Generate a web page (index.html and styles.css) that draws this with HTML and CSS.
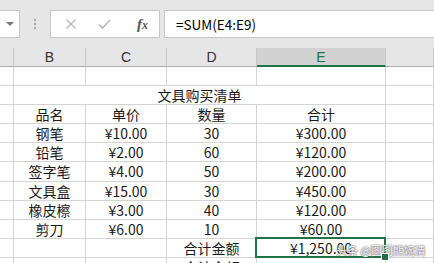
FILE: index.html
```html
<!DOCTYPE html>
<html lang="zh-CN">
<head>
    <meta charset="UTF-8">
    <title>文具购买清单</title>
    <link rel="stylesheet" href="styles.css">
</head>
<body>
    <div class="toolbar">
        <div class="name-box"><span class="arrow"></span></div>
        <div class="grip"><i></i><i></i><i></i></div>
        <div class="func-box">
            <svg class="icon" width="12" height="12" viewBox="0 0 12 12">
                <path d="M1.5 1.5 L10.5 10.5 M10.5 1.5 L1.5 10.5" stroke="#b8b8b8" stroke-width="1.3" fill="none"/>
            </svg>
            <svg class="icon" width="13" height="12" viewBox="0 0 13 12">
                <path d="M1 6.5 L4.5 10 L12 2" stroke="#b8b8b8" stroke-width="1.6" fill="none"/>
            </svg>
            <span class="fx">f<span>x</span></span>
        </div>
        <div class="formula">=SUM(E4:E9)</div>
    </div>

    <div class="sheet">
        <div class="head"></div>
        <div class="head">B</div>
        <div class="head">C</div>
        <div class="head">D</div>
        <div class="head active">E</div>
        <div class="head"></div>

        <div class="cell"></div><div class="cell"></div><div class="cell"></div><div class="cell"></div><div class="cell"></div><div class="cell"></div>

        <div class="cell"></div>
        <div class="cell title">文具购买清单</div>
        <div class="cell"></div>

        <div class="cell"></div><div class="cell">品名</div><div class="cell">单价</div><div class="cell">数量</div><div class="cell">合计</div><div class="cell"></div>
        <div class="cell"></div><div class="cell">钢笔</div><div class="cell">¥10.00</div><div class="cell">30</div><div class="cell">¥300.00</div><div class="cell"></div>
        <div class="cell"></div><div class="cell">铅笔</div><div class="cell">¥2.00</div><div class="cell">60</div><div class="cell">¥120.00</div><div class="cell"></div>
        <div class="cell"></div><div class="cell">签字笔</div><div class="cell">¥4.00</div><div class="cell">50</div><div class="cell">¥200.00</div><div class="cell"></div>
        <div class="cell"></div><div class="cell">文具盒</div><div class="cell">¥15.00</div><div class="cell">30</div><div class="cell">¥450.00</div><div class="cell"></div>
        <div class="cell"></div><div class="cell">橡皮檫</div><div class="cell">¥3.00</div><div class="cell">40</div><div class="cell">¥120.00</div><div class="cell"></div>
        <div class="cell"></div><div class="cell">剪刀</div><div class="cell">¥6.00</div><div class="cell">10</div><div class="cell">¥60.00</div><div class="cell"></div>
        <div class="cell"></div><div class="cell"></div><div class="cell"></div><div class="cell">合计金额</div><div class="cell selected">¥1,250.00</div><div class="cell"></div>
        <div class="cell"></div><div class="cell"></div><div class="cell"></div><div class="cell">合计金额</div><div class="cell"></div><div class="cell"></div>
    </div>

    <div class="watermark">头条 @图图熊婉清</div>
</body>
</html>
```

FILE: styles.css
```css
* {
    box-sizing: border-box;
}

body {
    margin: 0;
    height: 263px;
    overflow: hidden;
    background: #fff;
    font-family: "Noto Sans CJK SC", "Liberation Sans", sans-serif;
    font-size: 14px;
    color: #1a1a1a;
    position: relative;
}

.toolbar {
    height: 48px;
    background-color: #e6e6e6;
    display: flex;
    align-items: flex-start;
    padding-top: 10px;
}

.name-box {
    width: 20px;
    height: 28px;
    background: #fff;
    border: 1px solid #c6c6c6;
    border-left: none;
    display: flex;
    align-items: center;
    justify-content: center;
    padding-left: 1px;
}

.arrow {
    width: 0;
    height: 0;
    border-left: 4px solid transparent;
    border-right: 4px solid transparent;
    border-top: 4px solid #777;
}

.grip {
    width: 30px;
    height: 28px;
    display: flex;
    flex-direction: column;
    align-items: center;
    justify-content: center;
    gap: 2px;
}

.grip i {
    width: 2px;
    height: 2px;
    background: #a8a8a8;
}

.func-box {
    width: 110px;
    height: 28px;
    background: #fff;
    border: 1px solid #c6c6c6;
    display: flex;
    align-items: center;
    padding-left: 14px;
}

.func-box .icon:nth-child(2) {
    margin-left: 21px;
}

.fx {
    margin-left: 26px;
    font-family: "Liberation Serif", serif;
    font-style: italic;
    font-weight: bold;
    font-size: 15px;
    color: #555;
    line-height: 1;
}

.fx span {
    font-size: 12px;
}

.formula {
    flex: 1;
    height: 28px;
    margin-left: 4px;
    background: #fff;
    border: 1px solid #c6c6c6;
    border-right: none;
    padding-left: 11px;
    line-height: 26px;
    font-size: 13.5px;
    color: #000;
}

.sheet {
    display: grid;
    grid-template-columns: 14px 72px 81px 90px 129px 1fr;
    grid-template-rows: 19px 19px 19px 19px 19px 19px 20px 19px 19px 19px 19px 6px;
}

.head {
    background: #e6e6e6;
    border-right: 1px solid #c8c8c8;
    border-bottom: 1px solid #ababab;
    text-align: center;
    line-height: 18px;
    font-family: "Liberation Sans", sans-serif;
    font-size: 14px;
    color: #333;
}

.head.active {
    background: #d2d2d2;
    border-bottom: 2px solid #217346;
    color: #217346;
}

.cell {
    border-right: 1px solid #d4d4d4;
    border-bottom: 1px solid #d4d4d4;
    text-align: center;
    line-height: 18px;
    white-space: nowrap;
    position: relative;
}

.sheet .cell:nth-last-child(-n+6) {
    border-bottom: none;
    overflow: hidden;
}

.title {
    grid-column: 2 / 6;
}

.selected::after {
    content: "";
    position: absolute;
    left: -2px;
    top: -2px;
    right: -1px;
    bottom: -1px;
    border: 2px solid #217346;
}

.selected::before {
    content: "";
    position: absolute;
    right: -4px;
    bottom: -4px;
    width: 6px;
    height: 6px;
    background: #217346;
    border: 1px solid #fff;
    z-index: 1;
}

.watermark {
    position: absolute;
    left: 336px;
    top: 242px;
    font-size: 11px;
    color: #fff;
    text-shadow: 0 0 1px #444, 0 0 2px #666;
    white-space: nowrap;
}
```
